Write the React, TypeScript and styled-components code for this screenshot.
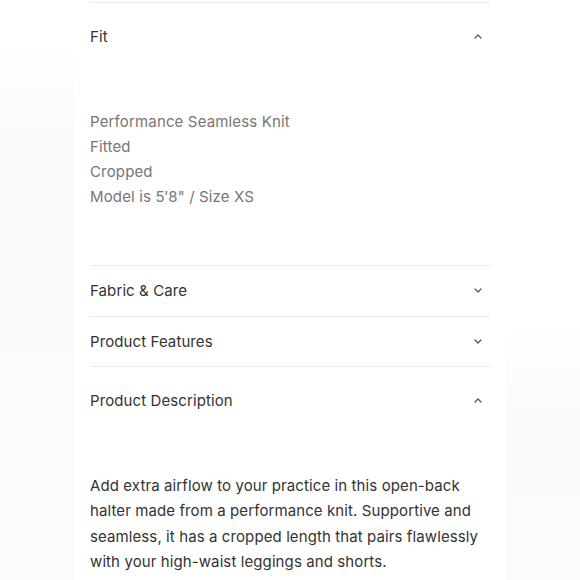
import React from "react";
import styled, { createGlobalStyle } from "styled-components";

const GlobalStyle = createGlobalStyle`
  html, body {
    margin: 0;
    padding: 0;
    background: #ffffff;
  }
  body {
    font-family: Inter, "Noto Sans", "Liberation Sans", sans-serif;
    -webkit-font-smoothing: antialiased;
  }
`;

type Item = {
  title: string;
  open: boolean;
  body?: React.ReactNode;
};

const Page = styled.div`
  display: flex;
  width: 580px;
  height: 580px;
  overflow: hidden;
`;

const Gutter = styled.div<{ $side: "left" | "right" }>`
  flex: 1;
  background: ${(p) =>
    p.$side === "left"
      ? "linear-gradient(180deg, #fff 0px, #fff 40px, #fafafa 140px, #fbfbfb 100%)"
      : "linear-gradient(180deg, #fff 0px, #fff 320px, #fafafa 420px, #fbfbfb 100%)"};
`;

const Panel = styled.div`
  width: 400px;
  padding: 0 16px;
  background: #ffffff;
`;

const Section = styled.div`
  border-top: 1px solid #ececec;
  &:first-child {
    margin-top: 2px;
  }
`;

const Header = styled.div<{ $open: boolean }>`
  display: flex;
  align-items: center;
  justify-content: space-between;
  height: ${(p) => (p.$open ? "66px" : "49.5px")};
  padding-right: 8px;
`;

const Title = styled.span`
  font-size: 15px;
  color: #333333;
  letter-spacing: 0.1px;
`;

const Chevron = styled.svg`
  width: 8px;
  height: 5px;
  display: block;
`;

const Content = styled.div`
  padding: 40px 0 56px;
`;

const List = styled.ul`
  list-style: none;
  margin: 0;
  padding: 0;
`;

const ListItem = styled.li`
  font-size: 15px;
  line-height: 25px;
  color: #767676;
  letter-spacing: 0.15px;
`;

const Paragraph = styled.p`
  margin: 0;
  font-size: 15px;
  line-height: 25.3px;
  color: #333333;
  letter-spacing: 0.1px;
`;

const ChevronIcon = ({ up }: { up: boolean }) => (
  <Chevron viewBox="0 0 8 5">
    <path
      d={up ? "M1 4 L4 1 L7 4" : "M1 1 L4 4 L7 1"}
      fill="none"
      stroke="#555"
      strokeWidth="1.3"
      strokeLinecap="round"
      strokeLinejoin="round"
    />
  </Chevron>
);

const items: Item[] = [
  {
    title: "Fit",
    open: true,
    body: (
      <List>
        <ListItem>Performance Seamless Knit</ListItem>
        <ListItem>Fitted</ListItem>
        <ListItem>Cropped</ListItem>
        <ListItem>Model is 5′8" / Size XS</ListItem>
      </List>
    ),
  },
  { title: "Fabric & Care", open: false },
  { title: "Product Features", open: false },
  {
    title: "Product Description",
    open: true,
    body: (
      <Paragraph>
        Add extra airflow to your practice in this open-back halter made from a
        performance knit. Supportive and seamless, it has a cropped length that
        pairs flawlessly with your high-waist leggings and shorts.
      </Paragraph>
    ),
  },
];

export default function App() {
  return (
    <>
      <GlobalStyle />
      <Page>
        <Gutter $side="left" />
        <Panel>
          {items.map((item) => (
            <Section key={item.title}>
              <Header $open={item.open}>
                <Title>{item.title}</Title>
                <ChevronIcon up={item.open} />
              </Header>
              {item.open && <Content>{item.body}</Content>}
            </Section>
          ))}
        </Panel>
        <Gutter $side="right" />
      </Page>
    </>
  );
}
